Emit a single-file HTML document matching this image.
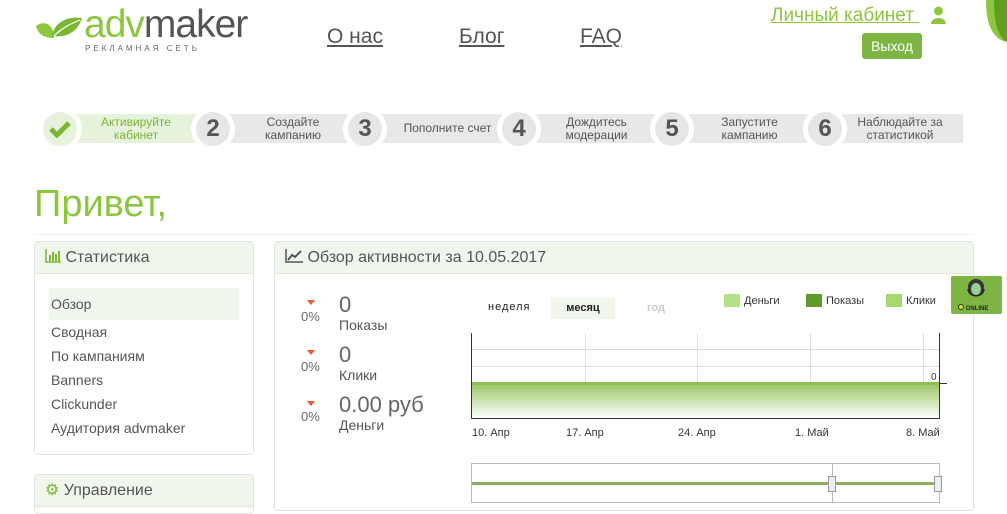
<!DOCTYPE html>
<html><head><meta charset="utf-8"><style>
*{margin:0;padding:0;box-sizing:border-box}
body{width:1007px;height:495px;overflow:hidden;background:#fff;font-family:"Liberation Sans",sans-serif;color:#555;position:relative}
.a{position:absolute}
.nav{font-size:21px;color:#555;text-decoration:underline;top:25px}
.step{position:absolute;top:114px;height:29px;background:#e8e8e8;font-size:12px;color:#555;text-align:center;line-height:13px;display:flex;align-items:center;justify-content:center}
.circ{position:absolute;top:112px;width:34px;height:34px;border-radius:50%;background:#e6e6e6;box-shadow:0 0 0 5px #fff;font-weight:bold;font-size:24px;color:#555;text-align:center;line-height:34px}
.panel{position:absolute;border:1px solid #e3e3e3;border-radius:3px}
.ph{height:32px;background:#f1f6ec;border-bottom:1px solid #e0e8d8;font-size:16px;color:#555;line-height:32px;padding-left:10px}
.menu div{font-size:14px;color:#555;height:24px;line-height:24px;padding-left:16px}
.tri{width:0;height:0;border-left:4px solid transparent;border-right:4px solid transparent;border-top:5px solid #e53;position:absolute}
.num{font-size:22px;color:#666}
.lab{font-size:14px;color:#555}
.pct{font-size:13px;color:#666}
.xl{position:absolute;top:427px;font-size:11px;color:#333}
</style></head><body>
<svg class="a" style="left:34px;top:14px" width="50" height="26" viewBox="0 0 50 26"><path d="M2 12 C10 6 20 10 20 24 C10 24 4 20 2 12Z" fill="#8cc63f"/><path d="M18 22 C20 8 34 2 48 4 C44 18 32 24 18 22Z" fill="#7ab534"/><path d="M20 22 C28 14 36 10 46 6" stroke="#fff" stroke-width="1.2" fill="none"/></svg>
<div class="a" style="left:84px;top:3px;font-size:39px;letter-spacing:-1px;line-height:44px"><span style="color:#8cc63f">adv</span><span style="color:#555">maker</span></div>
<div class="a" style="left:85px;top:44px;font-size:8px;letter-spacing:3px;color:#666">РЕКЛАМНАЯ СЕТЬ</div>
<a class="a nav" style="left:327px">О нас</a>
<a class="a nav" style="left:459px">Блог</a>
<a class="a nav" style="left:580px">FAQ</a>
<a class="a" style="left:771px;top:5px;font-size:19px;color:#8cc63f;text-decoration:underline">Личный кабинет&nbsp;</a>
<svg class="a" style="left:931px;top:6px" width="15" height="18" viewBox="0 0 15 18"><circle cx="7.5" cy="5" r="4.5" fill="#8cc63f"/><path d="M0 18 C0 10 15 10 15 18Z" fill="#8cc63f"/></svg>
<div class="a" style="left:862px;top:33px;width:60px;height:26px;background:#7db543;border-radius:3px;color:#fff;font-size:14px;line-height:26px;text-align:center">Выход</div>
<svg class="a" style="left:984px;top:0" width="23" height="44" viewBox="0 0 23 44"><path d="M23 0 L23 42 C12 40 2 30 2 0Z" fill="#8cc63f"/><path d="M23 0 L23 42 C16 38 10 28 10 0Z" fill="#5e9e20"/></svg>
<div class="step" style="left:60px;width:140px;background:#e7f2dc;color:#7ab534;padding-left:12px">Активируйте<br>кабинет</div>
<div class="step" style="left:213px;width:150px;padding-left:10px">Создайте<br>кампанию</div>
<div class="step" style="left:365px;width:155px;padding-left:10px">Пополните счет</div>
<div class="step" style="left:519px;width:155px;padding-left:0">Дождитесь<br>модерации</div>
<div class="step" style="left:672px;width:155px;padding-left:0">Запустите<br>кампанию</div>
<div class="step" style="left:825px;width:138px;padding-left:12px">Наблюдайте за<br>статистикой</div>
<div class="circ" style="left:43px;background:#e7f2dc"><svg width="22" height="18" viewBox="0 0 22 18" style="margin-top:8px"><path d="M2 9 L8 15 L20 3" stroke="#7ab534" stroke-width="5" fill="none"/></svg></div>
<div class="circ" style="left:196px">2</div>
<div class="circ" style="left:348px">3</div>
<div class="circ" style="left:502px">4</div>
<div class="circ" style="left:655px">5</div>
<div class="circ" style="left:808px">6</div>
<div class="a" style="left:34px;top:183px;font-size:38px;color:#8cc63f">Привет,</div>
<div class="a" style="left:34px;top:234px;width:940px;height:1px;background:#eee"></div>
<div class="panel" style="left:34px;top:241px;width:220px;height:214px">
<div class="ph"><svg width="16" height="14" viewBox="0 0 16 14" style="vertical-align:-1px"><path d="M1 0V13H16" stroke="#7ab534" stroke-width="1.5" fill="none"/><rect x="4" y="6" width="2" height="6" fill="#7ab534"/><rect x="7" y="3" width="2" height="9" fill="#7ab534"/><rect x="10" y="5" width="2" height="7" fill="#7ab534"/><rect x="13" y="2" width="2" height="10" fill="#7ab534"/></svg> Статистика</div>
<div class="menu" style="padding:14px 14px 0">
<div style="background:#f1f6ec;height:32px;line-height:32px;padding-left:2px">Обзор</div>
<div style="padding-left:2px">Сводная</div><div style="padding-left:2px">По кампаниям</div><div style="padding-left:2px">Banners</div><div style="padding-left:2px">Clickunder</div><div style="padding-left:2px">Аудитория advmaker</div>
</div></div>
<div class="panel" style="left:34px;top:474px;width:220px;height:40px"><div class="ph"><span style="color:#7ab534">⚙</span> Управление</div></div>
<div class="panel" style="left:274px;top:241px;width:700px;height:270px">
<div class="ph" style="padding-left:10px"><svg width="18" height="14" viewBox="0 0 18 14" style="vertical-align:-1px"><path d="M1 0V13H18" stroke="#555" stroke-width="1.5" fill="none"/><path d="M3 11 L7 6 L10 8 L16 2" stroke="#555" stroke-width="2" fill="none"/></svg> Обзор активности за 10.05.2017</div></div>
<div class="tri" style="left:307px;top:300px"></div><div class="a pct" style="left:301px;top:309px">0%</div>
<div class="a num" style="left:339px;top:292px">0</div><div class="a lab" style="left:339px;top:317px">Показы</div>
<div class="tri" style="left:307px;top:350px"></div><div class="a pct" style="left:301px;top:359px">0%</div>
<div class="a num" style="left:339px;top:342px">0</div><div class="a lab" style="left:339px;top:367px">Клики</div>
<div class="tri" style="left:307px;top:401px"></div><div class="a pct" style="left:301px;top:409px">0%</div>
<div class="a num" style="left:339px;top:392px">0.00 руб</div><div class="a lab" style="left:339px;top:417px">Деньги</div>
<div class="a" style="left:488px;top:301px;font-size:11px;color:#222;letter-spacing:1px">неделя</div>
<div class="a" style="left:551px;top:298px;width:64px;height:21px;background:#f1f6ec;font-size:11px;font-weight:bold;color:#222;text-align:center;line-height:21px">месяц</div>
<div class="a" style="left:647px;top:302px;font-size:11px;color:#ccc;font-weight:bold">год</div>
<div class="a" style="left:724px;top:294px;width:16px;height:13px;background:#b5e08a"></div><div class="a" style="left:744px;top:295px;font-size:11px;color:#333">Деньги</div>
<div class="a" style="left:806px;top:294px;width:16px;height:13px;background:#5f9a30"></div><div class="a" style="left:826px;top:295px;font-size:11px;color:#333">Показы</div>
<div class="a" style="left:886px;top:294px;width:16px;height:13px;background:#a4d870"></div><div class="a" style="left:906px;top:295px;font-size:11px;color:#333">Клики</div>
<div class="a" style="left:471px;top:333px;width:469px;height:86px;border-left:1px solid #333;border-bottom:1px solid #333;border-right:1px solid #333">
<div class="a" style="left:0;top:16px;width:100%;height:1px;background:#ddd"></div>
<div class="a" style="left:0;top:33px;width:100%;height:1px;background:#ddd"></div>
<div class="a" style="left:113px;top:0;width:1px;height:100%;background:#ddd"></div>
<div class="a" style="left:225px;top:0;width:1px;height:100%;background:#ddd"></div>
<div class="a" style="left:338px;top:0;width:1px;height:100%;background:#ddd"></div>
<div class="a" style="left:451px;top:0;width:1px;height:100%;background:#ddd"></div>
<div class="a" style="left:0;top:49px;width:100%;height:36px;background:linear-gradient(#9cc76a,#fff);border-top:3px solid #8cc050"></div>
</div>
<div class="a" style="left:940px;top:383px;width:7px;height:1px;background:#333"></div>
<div class="a" style="left:931px;top:372px;font-size:10px;color:#333">0</div>
<div class="xl" style="left:472px">10. Апр</div><div class="xl" style="left:566px">17. Апр</div><div class="xl" style="left:678px">24. Апр</div><div class="xl" style="left:795px">1. Май</div><div class="xl" style="left:906px">8. Май</div>
<div class="a" style="left:471px;top:463px;width:469px;height:40px;border:1px solid #bbb">
<div class="a" style="left:0;top:18px;width:100%;height:3px;background:#8faf60"></div>
<div class="a" style="left:360px;top:0;width:1px;height:100%;background:#bbb"></div>
<div class="a" style="left:356px;top:12px;width:8px;height:16px;background:#eee;border:1px solid #999"></div>
<div class="a" style="left:462px;top:12px;width:8px;height:16px;background:#eee;border:1px solid #999"></div>
</div>
<div class="a" style="left:951px;top:276px;width:51px;height:38px;background:#7db543;border-radius:2px">
<svg width="51" height="26" viewBox="0 0 51 26"><circle cx="25" cy="11" r="8" fill="#333"/><ellipse cx="25" cy="13" rx="5" ry="6" fill="#9c9"/><path d="M17 13 C18 22 32 22 33 13" stroke="#222" stroke-width="1.5" fill="none"/></svg>
<div style="font-size:6px;color:#222;font-weight:bold;padding-left:7px;margin-top:-3px"><span style="display:inline-block;width:6px;height:6px;border-radius:50%;background:#cd3;border:1px solid #333"></span> ONLINE</div></div>
</body></html>
